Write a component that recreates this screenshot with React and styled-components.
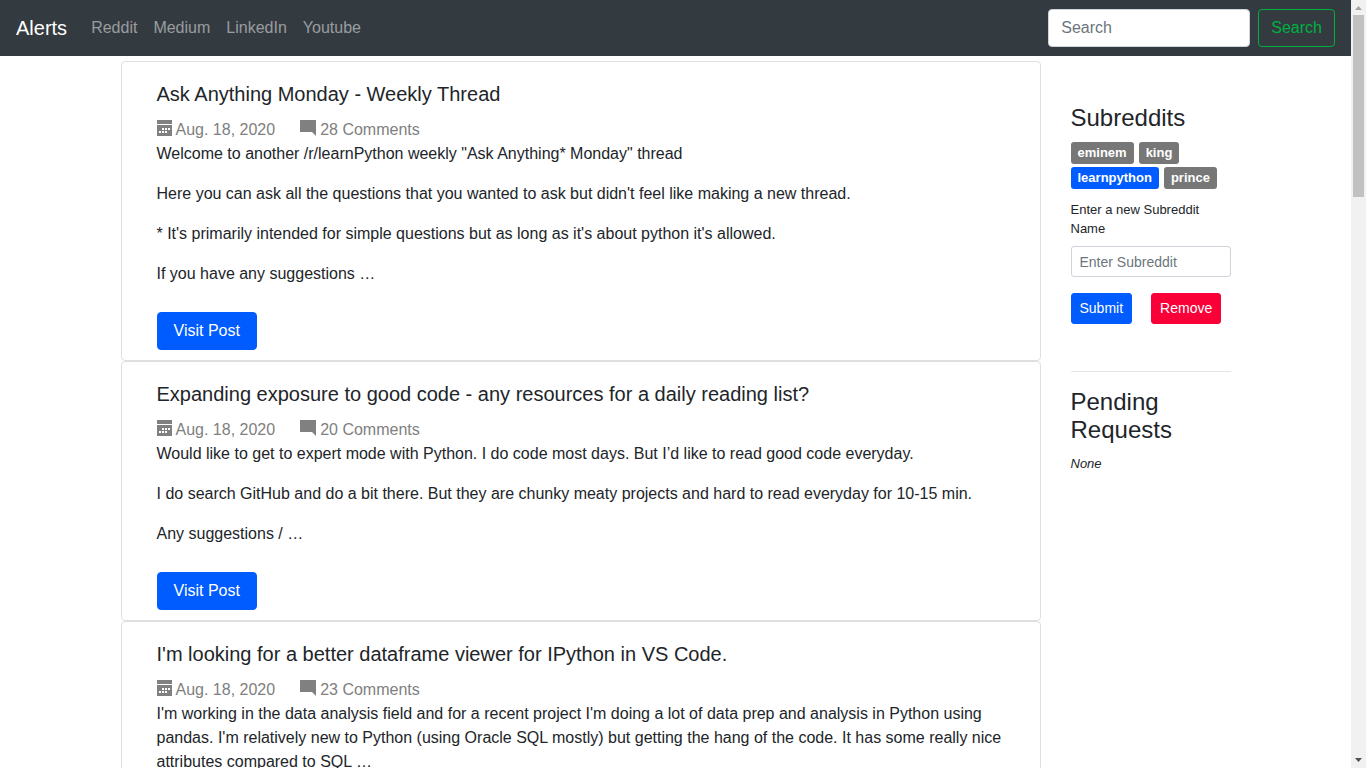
import React from "react";
import styled, { createGlobalStyle, css } from "styled-components";

const GlobalStyle = createGlobalStyle`
  *, *::before, *::after { box-sizing: border-box; }
  body {
    margin: 0;
    background: #fff;
    color: #212529;
    font: 400 16px/24px "Liberation Sans", Arial, sans-serif;
  }
  h1, h2, h5, p, ul { margin: 0; padding: 0; }
`;

const Screen = styled.div`
  display: flex;
  height: 100vh;
  overflow: hidden;
`;

const Page = styled.div`
  flex: 1;
  min-width: 0;
  overflow: hidden;
`;

const Navbar = styled.nav`
  display: flex;
  align-items: center;
  padding: 8px 16px;
  height: 56px;
  background: #333a40;
`;

const Brand = styled.a`
  margin-right: 16px;
  color: #fff;
  font-size: 20px;
  line-height: 30px;
  text-decoration: none;
`;

const NavList = styled.ul`
  display: flex;
  flex: 1;
  list-style: none;
`;

const NavLink = styled.a`
  display: block;
  padding: 8px;
  color: rgba(255, 255, 255, 0.5);
  text-decoration: none;
`;

const SearchForm = styled.form`
  display: flex;
  gap: 8px;
`;

const small = css`
  height: 31px;
  padding: 4px 8px;
  border-radius: 3px;
  font-size: 14px;
  line-height: 21px;
`;

const TextInput = styled.input`
  width: ${(p) => p.$width};
  height: 38px;
  padding: 6px 12px;
  border: 1px solid #ced4da;
  border-radius: 4px;
  background: #fff;
  color: #495057;
  font: inherit;
  &::placeholder { color: #6c757d; opacity: 1; }
  ${(p) => p.$small && small}
`;

const tones = {
  primary: css`background: #005cff; border-color: #005cff; color: #fff;`,
  danger: css`background: #fa0039; border-color: #fa0039; color: #fff;`,
  success: css`background: transparent; border-color: #00b140; color: #00b140;`,
};

const button = css`
  display: inline-block;
  height: 38px;
  padding: 6px 12px;
  border: 1px solid;
  border-radius: 4px;
  font: inherit;
  text-align: center;
  text-decoration: none;
  cursor: pointer;
  ${(p) => tones[p.$tone]}
  ${(p) => p.$small && small}
`;

const Button = styled.button`${button}`;

const VisitLink = styled.a`
  ${button}
  padding: 6px 16px;
  margin-top: 10px;
`;

const Container = styled.div`
  display: flex;
  gap: 30px;
  max-width: 1140px;
  margin: 0 auto;
  padding: 5px 15px 0;
`;

const Posts = styled.main`
  flex: 1;
  min-width: 0;
`;

const Card = styled.article`
  padding: 20px 35px 10px;
  border: 1px solid #dfdfdf;
  border-radius: 4px;
`;

const CardTitle = styled.h5`
  margin-bottom: 12px;
  font-size: 20px;
  font-weight: 400;
  line-height: 24px;
`;

const Meta = styled.div`
  display: flex;
  gap: 25px;
  color: #808080;
`;

const MetaItem = styled.span`
  display: flex;
  align-items: center;
  gap: 4px;
`;

const Paragraph = styled.p`
  margin-bottom: 16px;
`;

const Glyph = styled.svg`
  display: block;
  fill: currentColor;
  margin-bottom: 4px;
`;

const Sidebar = styled.aside`
  width: 160px;
  padding-top: 43px;
  font-size: 13px;
  line-height: 19px;
`;

const SideTitle = styled.h2`
  margin-bottom: 10px;
  font-size: 24px;
  font-weight: 400;
  line-height: 28px;
`;

const Badges = styled.div`
  display: flex;
  flex-wrap: wrap;
  gap: 3px 5px;
  margin-bottom: 11px;
`;

const Badge = styled.a`
  height: 22px;
  padding: 4px 7px;
  border-radius: 3px;
  background: ${(p) => (p.$active ? "#005cff" : "#777")};
  color: #fff;
  font-weight: 700;
  line-height: 14px;
  text-decoration: none;
`;

const Label = styled.label`
  display: block;
  margin-bottom: 8px;
`;

const Actions = styled.div`
  display: flex;
  gap: 19px;
  margin-top: 16px;
`;

const Divider = styled.hr`
  margin: 47px 0 16px;
  border: 0;
  border-top: 1px solid #e5e5e5;
`;

const ScrollTrack = styled.div`
  display: flex;
  flex-direction: column;
  width: 15px;
  background: #f1f1f1;
`;

const ScrollArrow = styled.svg`
  display: block;
  width: 15px;
  height: 15px;
  fill: ${(p) => p.$color};
`;

const ScrollThumb = styled.div`
  width: 11px;
  height: 182px;
  margin: 0 2px auto;
  background: #c1c1c1;
`;

const CalendarIcon = () => (
  <Glyph width="15" height="16" viewBox="0 0 15 16" aria-hidden="true" shapeRendering="crispEdges">
    <path
      fillRule="evenodd"
      d="M0 0h15v4H0zM0 5h15v11H0zM5 8v2h2V8zM8 8v2h2V8zM11 8v2h2V8zM2 11v2h2v-2zM5 11v2h2v-2zM8 11v2h2v-2z"
    />
  </Glyph>
);

const CommentIcon = () => (
  <Glyph width="16" height="16" viewBox="0 0 16 16" aria-hidden="true">
    <path d="M0 0h16v16l-4-4H0z" />
  </Glyph>
);

const links = ["Reddit", "Medium", "LinkedIn", "Youtube"];

const posts = [
  {
    title: "Ask Anything Monday - Weekly Thread",
    comments: 28,
    body: [
      'Welcome to another /r/learnPython weekly "Ask Anything* Monday" thread',
      "Here you can ask all the questions that you wanted to ask but didn't feel like making a new thread.",
      "* It's primarily intended for simple questions but as long as it's about python it's allowed.",
      "If you have any suggestions …",
    ],
  },
  {
    title: "Expanding exposure to good code - any resources for a daily reading list?",
    comments: 20,
    body: [
      "Would like to get to expert mode with Python. I do code most days. But I’d like to read good code everyday.",
      "I do search GitHub and do a bit there. But they are chunky meaty projects and hard to read everyday for 10-15 min.",
      "Any suggestions / …",
    ],
  },
  {
    title: "I'm looking for a better dataframe viewer for IPython in VS Code.",
    comments: 23,
    body: [
      "I'm working in the data analysis field and for a recent project I'm doing a lot of data prep and analysis in Python using pandas. I'm relatively new to Python (using Oracle SQL mostly) but getting the hang of the code. It has some really nice attributes compared to SQL …",
    ],
  },
];

const subreddits = ["eminem", "king", "learnpython", "prince"];

export default function App() {
  return (
    <>
      <GlobalStyle />
      <Screen>
        <Page>
          <Navbar>
            <Brand href="#">Alerts</Brand>
            <NavList>
              {links.map((name) => (
                <li key={name}>
                  <NavLink href="#">{name}</NavLink>
                </li>
              ))}
            </NavList>
            <SearchForm onSubmit={(e) => e.preventDefault()}>
              <TextInput type="search" placeholder="Search" aria-label="Search" $width="202px" />
              <Button $tone="success">Search</Button>
            </SearchForm>
          </Navbar>
          <Container>
            <Posts>
              {posts.map((post) => (
                <Card key={post.title}>
                  <CardTitle>{post.title}</CardTitle>
                  <Meta>
                    <MetaItem>
                      <CalendarIcon />
                      Aug. 18, 2020
                    </MetaItem>
                    <MetaItem>
                      <CommentIcon />
                      {`${post.comments} Comments`}
                    </MetaItem>
                  </Meta>
                  {post.body.map((text) => (
                    <Paragraph key={text}>{text}</Paragraph>
                  ))}
                  <VisitLink href="#" $tone="primary">Visit Post</VisitLink>
                </Card>
              ))}
            </Posts>
            <Sidebar>
              <SideTitle>Subreddits</SideTitle>
              <Badges>
                {subreddits.map((name) => (
                  <Badge key={name} href="#" $active={name === "learnpython"}>{name}</Badge>
                ))}
              </Badges>
              <form onSubmit={(e) => e.preventDefault()}>
                <Label htmlFor="subreddit">Enter a new Subreddit Name</Label>
                <TextInput id="subreddit" type="text" placeholder="Enter Subreddit" $width="100%" $small />
                <Actions>
                  <Button $tone="primary" $small>Submit</Button>
                  <Button type="button" $tone="danger" $small>Remove</Button>
                </Actions>
              </form>
              <Divider />
              <SideTitle>Pending Requests</SideTitle>
              <em>None</em>
            </Sidebar>
          </Container>
        </Page>
        <ScrollTrack aria-hidden="true">
          <ScrollArrow $color="#a3a3a3" viewBox="0 0 15 15"><path d="M4 10h7L7.500 6z" /></ScrollArrow>
          <ScrollThumb />
          <ScrollArrow $color="#505050" viewBox="0 0 15 15"><path d="M4 5h7L7.500 9z" /></ScrollArrow>
        </ScrollTrack>
      </Screen>
    </>
  );
}
